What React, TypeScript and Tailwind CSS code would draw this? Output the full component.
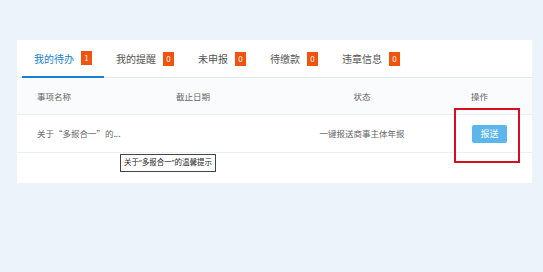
import React from "react";

const tabs = [
  { label: "我的待办", count: 1, active: true },
  { label: "我的提醒", count: 0 },
  { label: "未申报", count: 0 },
  { label: "待缴款", count: 0 },
  { label: "违章信息", count: 0 },
];

const font = { fontFamily: '"Noto Sans CJK SC", "Noto Sans", sans-serif' };

export default function App() {
  return (
    <div className="relative min-h-[272px] bg-[#edf3fb] pt-[40px] pl-[17px] pr-[11px]" style={font}>
      {/* Card */}
      <div className="bg-white h-[143px]">
        {/* Tabs */}
        <div className="flex h-[38px] pl-[5px] border-b border-[#e6e9ee]">
          {tabs.map((t) => (
            <div
              key={t.label}
              className={`flex items-center px-3 gap-[7px] text-[10px] ${
                t.active ? "text-[#1a7fd0] border-b-2 border-[#1a7fd0] -mb-px" : "text-[#555]"
              }`}
            >
              <span>{t.label}</span>
              <span className="flex items-center justify-center w-[11px] h-[14px] bg-[#f1520d] text-white text-[8px] leading-none">
                {t.count}
              </span>
            </div>
          ))}
        </div>

        {/* Header row */}
        <div className="grid grid-cols-[139px_124px_124px_1fr] items-center px-5 h-[37px] bg-[#fafbfc] border-b border-[#eceef2] text-[8.5px] text-[#666]">
          <div>事项名称</div>
          <div>截止日期</div>
          <div className="text-center">状态</div>
          <div className="pl-[47px]">操作</div>
        </div>

        {/* Data row */}
        <div className="grid grid-cols-[139px_124px_124px_1fr] items-center px-5 h-[38px] border-b border-[#eceef2] text-[8.5px] text-[#666]">
          <div>关于“多报合一”的...</div>
          <div></div>
          <div className="text-center">一键报送商事主体年报</div>
          <div className="pl-[48px]">
            <button className="w-[35px] h-[18px] bg-[#5cb6ec] text-white text-[9px] rounded-[2px]">报送</button>
          </div>
        </div>
      </div>

      {/* Tooltip */}
      <div
        className="absolute left-[120px] top-[154px] h-[18px] px-[3px] flex items-center bg-white border border-[#444] text-[7.5px] text-[#222] whitespace-nowrap"
        style={{ fontFamily: '"Noto Sans", "Noto Sans CJK SC", sans-serif' }}
      >
        关于“多报合一”的温馨提示
      </div>

      {/* Red highlight box */}
      <div className="absolute left-[454px] top-[108px] w-[66px] h-[55px] border-2 border-[#d4101e]"></div>
    </div>
  );
}
